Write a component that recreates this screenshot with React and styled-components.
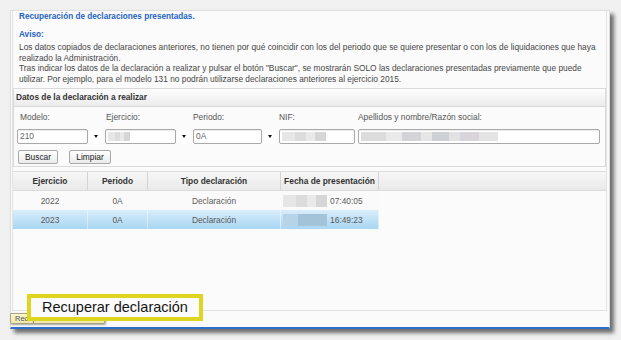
import styled, { createGlobalStyle } from 'styled-components';

const GlobalStyle = createGlobalStyle`
  html, body {
    margin: 0;
    background: #f1f1f1;
  }
  body {
    font-family: "Liberation Sans", Arial, sans-serif;
  }
`;

const Page = styled.div`
  position: relative;
  width: 621px;
  height: 340px;
  padding: 10px 0 0 10px;
  box-sizing: border-box;
  overflow: hidden;
`;

const Panel = styled.div`
  width: 600px;
  height: 319px;
  box-sizing: border-box;
  background: #fbfbfb;
  border: 1px solid #dedede;
  border-bottom: 2px solid #2d6fc6;
  box-shadow: 4px 4px 4px rgba(0, 0, 0, 0.55);
  display: flex;
  flex-direction: column;
`;

const Content = styled.div`
  flex: 1;
  margin: 0 2px 0 1px;
  border: 1px solid #e2e2e2;
  border-top: none;
  display: flex;
  flex-direction: column;
`;

const Title = styled.div`
  padding-left: 6px;
  font-size: 8.2px;
  line-height: 11px;
  font-weight: bold;
  color: #1e63c4;
  margin-top: ${(p) => p.gap || 0}px;
`;

const Text = styled.p`
  margin: 2px 0 0;
  padding-left: 6px;
  font-size: 8.35px;
  line-height: 10.5px;
  color: #474747;
  white-space: nowrap;
`;

const Fieldset = styled.div`
  margin-top: 4px;
  border: 1px solid #dadada;
  background: #fbfbfb;
`;

const Legend = styled.div`
  height: 17px;
  line-height: 17px;
  padding-left: 2px;
  font-size: 8.3px;
  font-weight: bold;
  color: #333;
  background: linear-gradient(#fdfdfd, #ececec);
  border-bottom: 1px solid #d8d8d8;
`;

const FormBody = styled.div`
  padding: 5px 0 2px 3px;
`;

const FieldRow = styled.div`
  display: flex;
  gap: 3px;
`;

const Field = styled.div`
  width: ${(p) => p.w}px;
  display: flex;
  flex-direction: column;
`;

const Label = styled.div`
  font-size: 8.4px;
  line-height: 11px;
  color: #555;
  padding-left: ${(p) => p.indent || 0}px;
  margin-bottom: 6px;
  white-space: nowrap;
`;

const InputLine = styled.div`
  display: flex;
  height: 15px;
`;

const Input = styled.div`
  flex: 1;
  box-sizing: border-box;
  border: 1px solid #a9a9a9;
  border-radius: 2px;
  background: #fff;
  box-shadow: inset 0 1px 1px rgba(0, 0, 0, 0.08);
  font-size: 8.4px;
  line-height: 13px;
  color: #666;
  padding-left: 2px;
  display: flex;
  align-items: center;
`;

const Arrow = styled.div`
  width: 12px;
  margin-left: 2px;
  background: #fff;
  display: flex;
  align-items: center;
  justify-content: center;

  &::after {
    content: '';
    border-left: 2.5px solid transparent;
    border-right: 2.5px solid transparent;
    border-top: 3px solid #111;
  }
`;

const Blur = styled.span`
  display: inline-block;
  width: ${(p) => p.w}px;
  height: ${(p) => p.h || 9}px;
  background: ${(p) =>
    p.blue
      ? 'linear-gradient(90deg, #b6d4e8 0 35%, #a3c3d9 35% 100%)'
      : 'linear-gradient(90deg, #e6e6e6 0 30%, #dcdcdc 30% 55%, #e9e9e9 55% 75%, #d6d6d6 75% 100%)'};
`;

const NameBlur = styled.span`
  display: inline-block;
  width: 137px;
  height: 9px;
  background: linear-gradient(
    90deg,
    #dcdcdc 0 18%,
    #eaeaea 18% 30%,
    #d3d3d8 30% 44%,
    #e6e6e6 44% 52%,
    #cfcfd6 52% 64%,
    #e2e2e2 64% 72%,
    #d8d4dc 72% 86%,
    #e4e4e4 86% 100%
  );
`;

const Buttons = styled.div`
  display: flex;
  gap: 11px;
  margin: 6px 0 0 1px;
`;

const Button = styled.div`
  width: ${(p) => p.w}px;
  height: 14px;
  box-sizing: border-box;
  border: 1px solid #a8a8a8;
  border-radius: 2px;
  background: linear-gradient(#ffffff, #ebebeb);
  font-size: 8.4px;
  line-height: 12px;
  color: #222;
  text-align: center;
`;

const Table = styled.div`
  margin: 4px 0 0 0;
  border-top: 1px solid #dedede;
`;

const HeaderRow = styled.div`
  display: flex;
  height: 18px;
  background: linear-gradient(#f7f7f7, #e9e9e9);
  border-bottom: 1px solid #dcdcdc;
`;

const Row = styled.div`
  display: flex;
  width: 366px;
  height: 19px;
  background: ${(p) =>
    p.selected ? 'linear-gradient(#d8edfa, #a9d6f3)' : '#fafafa'};
`;

const Cell = styled.div`
  width: ${(p) => p.w}px;
  box-sizing: border-box;
  display: flex;
  align-items: center;
  justify-content: ${(p) => (p.left ? 'flex-start' : 'center')};
  padding-left: ${(p) => (p.left ? 2 : 0)}px;
  gap: 3px;
  font-size: 8.4px;
  font-weight: ${(p) => (p.head ? 'bold' : 'normal')};
  color: ${(p) => (p.head ? '#333' : '#5a5a5a')};
  border-right: 1px solid
    ${(p) => (p.head ? '#d4d4d4' : p.selected ? 'rgba(255,255,255,0.45)' : 'transparent')};
  white-space: nowrap;
`;

const Footer = styled.div`
  height: 16px;
`;

const SmallButton = styled.div`
  width: 95px;
  height: 11px;
  margin: 2px 0 0 -1px;
  box-sizing: border-box;
  border: 1px solid #aaa47c;
  border-radius: 1px;
  background: linear-gradient(#faf6d2, #efe8ad);
  box-shadow: 1px 1px 2px rgba(0, 0, 0, 0.35);
  font-size: 7.5px;
  line-height: 9px;
  color: #555;
  padding-left: 4px;
  white-space: nowrap;
  overflow: hidden;
`;

const Callout = styled.div`
  position: absolute;
  left: 27px;
  top: 294px;
  width: 176px;
  height: 27px;
  box-sizing: border-box;
  border: 4px solid #dfd51f;
  background: #fbfbfb;
  font-size: 14.5px;
  line-height: 19px;
  color: #151515;
  padding-left: 11px;
  white-space: nowrap;
`;

const cols = [75, 60, 133, 98];

const rows = [
  { year: '2022', time: '07:40:05' },
  { year: '2023', time: '16:49:23', selected: true },
];

function App() {
  return (
    <Page>
      <GlobalStyle />
      <Panel>
        <Content>
          <Title>Recuperación de declaraciones presentadas.</Title>
          <Title gap={7}>Aviso:</Title>
          <Text>
            Los datos copiados de declaraciones anteriores, no tienen por qué coincidir con los del periodo que se quiere presentar o con los de liquidaciones que haya
            <br />
            realizado la Administración.
            <br />
            Tras indicar los datos de la declaración a realizar y pulsar el botón "Buscar", se mostrarán SOLO las declaraciones presentadas previamente que puede
            <br />
            utilizar. Por ejemplo, para el modelo 131 no podrán utilizarse declaraciones anteriores al ejercicio 2015.
          </Text>

          <Fieldset>
            <Legend>Datos de la declaración a realizar</Legend>
            <FormBody>
              <FieldRow>
                <Field w={85}>
                  <Label indent={3}>Modelo:</Label>
                  <InputLine>
                    <Input>210</Input>
                    <Arrow />
                  </InputLine>
                </Field>
                <Field w={85}>
                  <Label indent={1}>Ejercicio:</Label>
                  <InputLine>
                    <Input>
                      <Blur w={22} />
                    </Input>
                    <Arrow />
                  </InputLine>
                </Field>
                <Field w={83}>
                  <Label>Periodo:</Label>
                  <InputLine>
                    <Input>0A</Input>
                    <Arrow />
                  </InputLine>
                </Field>
                <Field w={76}>
                  <Label>NIF:</Label>
                  <InputLine>
                    <Input>
                      <Blur w={44} />
                    </Input>
                  </InputLine>
                </Field>
                <Field w={242}>
                  <Label>Apellidos y nombre/Razón social:</Label>
                  <InputLine>
                    <Input>
                      <NameBlur />
                    </Input>
                  </InputLine>
                </Field>
              </FieldRow>
              <Buttons>
                <Button w={40}>Buscar</Button>
                <Button w={42}>Limpiar</Button>
              </Buttons>
            </FormBody>
          </Fieldset>

          <Table>
            <HeaderRow>
              <Cell head w={cols[0]}>Ejercicio</Cell>
              <Cell head w={cols[1]}>Periodo</Cell>
              <Cell head w={cols[2]}>Tipo declaración</Cell>
              <Cell head w={cols[3]}>Fecha de presentación</Cell>
            </HeaderRow>
            {rows.map((r) => (
              <Row key={r.year} selected={r.selected}>
                <Cell w={cols[0]} selected={r.selected}>{r.year}</Cell>
                <Cell w={cols[1]} selected={r.selected}>0A</Cell>
                <Cell w={cols[2]} selected={r.selected}>Declaración</Cell>
                <Cell w={cols[3]} left selected={r.selected}>
                  <Blur w={44} h={12} blue={r.selected} />
                  {r.time}
                </Cell>
              </Row>
            ))}
          </Table>
        </Content>
        <Footer>
          <SmallButton>Recuperar declaración</SmallButton>
        </Footer>
      </Panel>
      <Callout>Recuperar declaración</Callout>
    </Page>
  );
}

export default App;
